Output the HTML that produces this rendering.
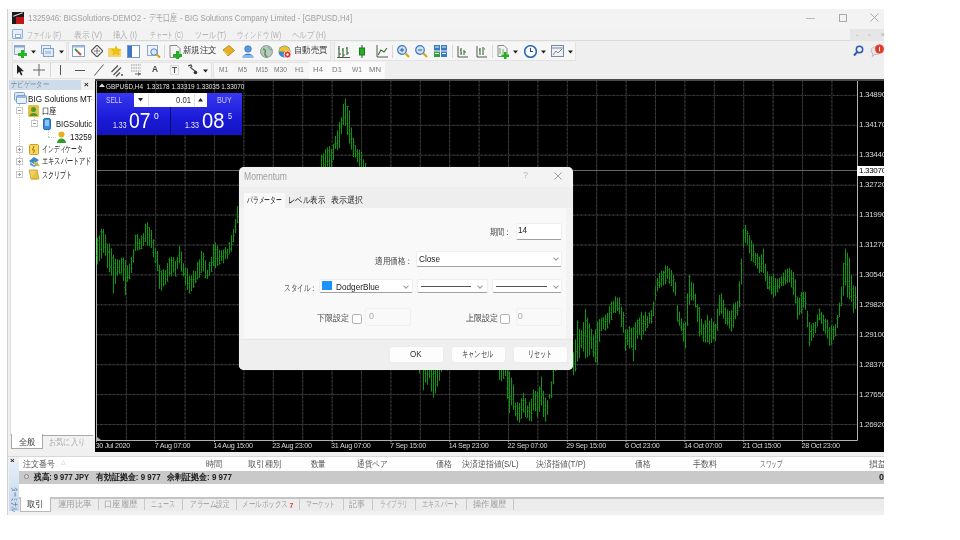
<!DOCTYPE html>
<html><head><meta charset="utf-8">
<style>
*{box-sizing:border-box;margin:0;padding:0}
html,body{width:960px;height:540px;overflow:hidden;background:#fff}
body{position:relative;font-family:"Liberation Sans",sans-serif;font-size:9px;color:#333}
.a{position:absolute;white-space:nowrap}
.mi{position:absolute;top:30px;font-size:9px;color:#a8a8a8;line-height:10px}
.grp{position:absolute;background:#f6f6f6;border:1px solid #e3e3e3}
.sep{position:absolute;width:1px;background:#d6d6d6}
.dd{position:absolute;width:0;height:0;border-left:2.5px solid transparent;border-right:2.5px solid transparent;border-top:3px solid #222}
.tf{position:absolute;top:66px;font-size:7.5px;color:#777;line-height:9px}
.pl{position:absolute;left:859px;width:25px;overflow:hidden;font-size:8px;color:#d8d8d8;font-family:"Liberation Sans",sans-serif;line-height:10px;letter-spacing:-0.3px}
.tl{position:absolute;top:440.5px;font-size:7.2px;color:#d8d8d8;font-family:"Liberation Sans",sans-serif;line-height:10px;letter-spacing:-0.25px}
.nr{position:absolute;font-size:9px;color:#222;line-height:11px}
.th{position:absolute;top:459px;font-size:9px;color:#555;line-height:11px}
.tab{position:absolute;top:500px;font-size:9px;color:#a0a0a0;line-height:10px}
.tsep{position:absolute;top:499px;width:1px;height:11px;background:#c8c8c8}
.lab{position:absolute;font-size:9px;color:#444;line-height:11px}
.inp{position:absolute;background:#fff;border:1px solid #efefef;border-bottom:1px solid #a0a0a0;border-radius:2px}
.chev{position:absolute;width:4px;height:4px;border-right:1px solid #999;border-bottom:1px solid #999;transform:rotate(45deg)}
.btn{position:absolute;top:346px;width:55px;height:17px;background:#fdfdfd;border:1px solid #ececec;border-radius:3px;font-size:9px;color:#333;text-align:center;line-height:16px}
#root{position:absolute;left:0;top:0;width:960px;height:540px;filter:blur(0.4px)}
</style></head><body><div id="root">
<!-- window frame -->
<div class="a" style="left:7px;top:9px;width:877px;height:506px;background:#f0f0f0;border-left:1px solid #d0d0d0"></div>
<!-- title bar -->
<div class="a" style="left:8px;top:9px;width:876px;height:19px;background:#f3f3f3"></div>
<div class="a" style="left:12px;top:12px;width:12px;height:12px;background:#1a1a1a"></div>
<div class="a" style="left:16px;top:17px;width:8px;height:7px;background:#c0161c"></div>
<div class="a" style="left:13px;top:14px;width:10px;height:1px;background:#ddd;transform:rotate(-20deg)"></div>
<div class="a" style="left:806px;top:18px;width:9px;height:1px;background:#b8b8b8"></div>
<div class="a" style="left:839px;top:14px;width:8px;height:8px;border:1px solid #a8a8a8"></div>
<svg class="a" style="left:870px;top:13px" width="9" height="9"><path d="M0.5 0.5L8.5 8.5M8.5 0.5L0.5 8.5" stroke="#a8a8a8" stroke-width="1"/></svg>
<!-- menu -->
<div class="a" style="left:8px;top:28px;width:876px;height:13px;background:#f2f2f2;border-bottom:1px solid #dadada"></div>
<div class="a" style="left:12px;top:29px;width:11px;height:10px;border:1px solid #8fb0d8;background:#e3eefa;border-radius:1px"></div>
<div class="a" style="left:15px;top:34px;width:6px;height:4px;border:1px solid #8fb0d8;background:#fff"></div>
<div class="a" style="left:850px;top:29px;width:34px;height:12px;background:#e6e6e6"></div>
<div class="a" style="left:856px;top:30px;font-size:7px;color:#aaa;line-height:10px;letter-spacing:4px">- ▫ ×</div>
<!-- toolbar 1 -->
<div class="a" style="left:8px;top:41px;width:876px;height:20px;background:#efefef"></div>
<div class="grp" style="left:12px;top:42px;width:55px;height:19px;border-top:none"></div>
<div class="grp" style="left:68px;top:42px;width:263px;height:19px;border-top:none"></div>
<div class="grp" style="left:334px;top:42px;width:242px;height:19px;border-top:none"></div>
<svg class="a" style="left:14px;top:45px" width="13" height="13"><rect x="0.5" y="0.5" width="10" height="9" fill="#e8f0fa" stroke="#8aaad0"/><rect x="0.5" y="0.5" width="10" height="2" fill="#8aaad0"/><path d="M7 5h3v3h3v3h-3v3h-3v-3h-3v-3h3z" fill="#22b822"/></svg>
<svg class="a" style="left:31px;top:50px" width="5" height="4"><path d="M0 0.5H5L2.5 3.5Z" fill="#222"/></svg>
<svg class="a" style="left:41px;top:45px" width="13" height="13"><rect x="0.5" y="0.5" width="9" height="8" fill="#e8f0fa" stroke="#8aaad0"/><rect x="2.5" y="3.5" width="10" height="8" fill="#dfeaf7" stroke="#7fa2cc"/><rect x="4" y="6" width="6" height="3" fill="#b5cbe6"/></svg>
<svg class="a" style="left:59px;top:50px" width="5" height="4"><path d="M0 0.5H5L2.5 3.5Z" fill="#222"/></svg>
<svg class="a" style="left:72px;top:45px" width="13" height="13"><rect x="0.5" y="0.5" width="12" height="11" fill="#fff" stroke="#7fa2cc"/><rect x="0.5" y="0.5" width="12" height="2" fill="#9cb8dc"/><path d="M3 4l3 3" stroke="#3a9a3a" stroke-width="2"/><path d="M6 7l3 3" stroke="#d04a3a" stroke-width="2"/></svg>
<svg class="a" style="left:91px;top:45px" width="12" height="12"><path d="M6 0L12 6L6 12L0 6Z" fill="none" stroke="#555" stroke-width="1.2"/><path d="M6 3V9M3 6H9" stroke="#777"/></svg>
<svg class="a" style="left:108px;top:45px" width="14" height="13"><path d="M0 3h5l1 1h7v8H0z" fill="#f4d266"/><path d="M8 1l1.5 3 3.2.4-2.4 2.2.7 3.2L8 8.3 5.1 9.8l.7-3.2L3.4 4.4l3.2-.4z" fill="#f2c600" stroke="#d8a800" stroke-width=".5"/></svg>
<svg class="a" style="left:127px;top:45px" width="13" height="13"><rect x="0.5" y="0.5" width="12" height="12" fill="#fff" stroke="#6e98cc"/><rect x="1" y="1" width="4" height="11" fill="#3c78c8"/></svg>
<svg class="a" style="left:147px;top:45px" width="14" height="13"><rect x="0.5" y="0.5" width="10" height="10" fill="#eef3fa" stroke="#8aaad0"/><circle cx="7" cy="7" r="3.2" fill="#d8e6f6" stroke="#5a86c0"/><path d="M9.3 9.3L13 12.5" stroke="#d0a020" stroke-width="2"/></svg>
<div class="sep" style="left:164px;top:45px;height:13px"></div>
<svg class="a" style="left:169px;top:45px" width="14" height="14"><path d="M1 0.5h7l3 3v9H1z" fill="#f4f4f4" stroke="#888"/><path d="M7 6h3v3h3v3h-3v3h-3v-3H4V9h3z" fill="#22b022"/></svg>
<svg class="a" style="left:222px;top:45px" width="13" height="12"><path d="M1 5L7 0.5L12.5 5.5L6 11Z" fill="#e8b020" stroke="#a87a10" stroke-width=".8"/><path d="M2 6.5L6 10" stroke="#f8e090"/></svg>
<svg class="a" style="left:242px;top:45px" width="12" height="13"><circle cx="6" cy="4" r="3.3" fill="#5a9ad8" stroke="#2a6ab0" stroke-width=".6"/><path d="M0.5 12.5C0.5 7.5 11.5 7.5 11.5 12.5Z" fill="#3a7ac8"/><rect x="1" y="10" width="10" height="2.5" fill="#8ab8e8"/></svg>
<svg class="a" style="left:260px;top:45px" width="13" height="13"><circle cx="6.5" cy="6.5" r="6" fill="#b8c8c0" stroke="#8a9a90"/><path d="M3 4c2 0 3 2 2 4s1 3 2 4" stroke="#4a9a4a" stroke-width="1.5" fill="none"/><path d="M8 2c1 2 3 3 4 3" stroke="#6a8" fill="none"/></svg>
<svg class="a" style="left:278px;top:45px" width="14" height="14"><circle cx="6.5" cy="6.5" r="6" fill="#3a88d0"/><path d="M1 6.5A5.5 5.5 0 0 1 12 6.5" fill="#f2c020"/><circle cx="9.5" cy="9.5" r="3.5" fill="#e03020" stroke="#fff" stroke-width=".8"/><circle cx="9.5" cy="9.5" r="1.2" fill="#fff"/></svg>
<svg class="a" style="left:337px;top:45px" width="13" height="13"><path d="M2 1v11M1 4h1M2 9h2M6 3v9M5 5h1M6 10h2M10 2v8M9 3h1M10 8h2" stroke="#3a6a3a" stroke-width="1.2"/><path d="M0 12.5h13" stroke="#555"/></svg>
<svg class="a" style="left:356px;top:45px" width="12" height="13"><path d="M6 0v13" stroke="#444"/><rect x="3.5" y="3" width="5" height="7" fill="#22b022" stroke="#1a7a1a"/></svg>
<svg class="a" style="left:376px;top:45px" width="12" height="13"><path d="M1 0v12h11" stroke="#555" fill="none"/><path d="M2 10L5 5L8 7L11 3" stroke="#3a6a3a" stroke-width="1.2" fill="none"/></svg>
<div class="sep" style="left:392px;top:45px;height:13px"></div>
<svg class="a" style="left:397px;top:45px" width="13" height="13"><circle cx="5" cy="5" r="4.3" fill="#cfe2f6" stroke="#3a78c0" stroke-width="1.2"/><path d="M3 5h4M5 3v4" stroke="#2a5aa0"/><path d="M8.3 8.3L12 12" stroke="#d8a820" stroke-width="2.2"/></svg>
<svg class="a" style="left:415px;top:45px" width="13" height="13"><circle cx="5" cy="5" r="4.3" fill="#cfe2f6" stroke="#3a78c0" stroke-width="1.2"/><path d="M3 5h4" stroke="#2a5aa0"/><path d="M8.3 8.3L12 12" stroke="#d8a820" stroke-width="2.2"/></svg>
<svg class="a" style="left:434px;top:45px" width="13" height="12"><rect x="0" y="0" width="6" height="5.5" fill="#3a78c8"/><rect x="7" y="0" width="6" height="5.5" fill="#3a78c8"/><rect x="0" y="6.5" width="6" height="5.5" fill="#3a9a3a"/><rect x="7" y="6.5" width="6" height="5.5" fill="#3a78c8"/><path d="M1 2h4M8 2h4M1 8.5h4M8 8.5h4" stroke="#dfe"/></svg>
<div class="sep" style="left:452px;top:45px;height:13px"></div>
<svg class="a" style="left:456px;top:45px" width="12" height="13"><path d="M2 1v11h10" stroke="#555" fill="none"/><path d="M5 3v7M4 5h1M5 8h1M8 5v5M8 7h2" stroke="#3a6a3a" stroke-width="1.1"/></svg>
<svg class="a" style="left:475px;top:45px" width="12" height="13"><path d="M2 1v11h10" stroke="#555" fill="none"/><path d="M5 3v7M4 5h1M8 2v8M9 4h1" stroke="#3a6a3a" stroke-width="1.1"/></svg>
<div class="sep" style="left:492px;top:45px;height:13px"></div>
<svg class="a" style="left:497px;top:45px" width="13" height="14"><path d="M1 0.5h6l3 3v8H1z" fill="#f2f2f2" stroke="#888"/><path d="M3 3v6M6 4v5" stroke="#6a6"/><path d="M7 7h2.5v2.5H12V12H9.5v2.5H7V12H4.5V9.5H7z" fill="#22b022"/></svg>
<svg class="a" style="left:513px;top:50px" width="5" height="4"><path d="M0 0.5H5L2.5 3.5Z" fill="#222"/></svg>
<svg class="a" style="left:524px;top:45px" width="13" height="13"><circle cx="6.5" cy="6.5" r="5.8" fill="#fff" stroke="#2a6ab8" stroke-width="1.6"/><path d="M6.5 3v3.5h2.5" stroke="#2a4a80" stroke-width="1.1" fill="none"/></svg>
<svg class="a" style="left:541px;top:50px" width="5" height="4"><path d="M0 0.5H5L2.5 3.5Z" fill="#222"/></svg>
<svg class="a" style="left:551px;top:45px" width="13" height="12"><rect x="0.5" y="0.5" width="12" height="11" fill="#eef2f8" stroke="#7a8aa0"/><path d="M1 3h11" stroke="#7a8aa0"/><path d="M2 10L5 6L7 8L11 4" stroke="#888" fill="none"/></svg>
<svg class="a" style="left:568px;top:50px" width="5" height="4"><path d="M0 0.5H5L2.5 3.5Z" fill="#222"/></svg>
<svg class="a" style="left:853px;top:45px" width="11" height="12"><circle cx="6.5" cy="4.5" r="3.2" fill="none" stroke="#2a5ab0" stroke-width="1.5"/><path d="M4.3 6.8L1 10.5" stroke="#2a5ab0" stroke-width="2"/></svg>
<svg class="a" style="left:870px;top:44px" width="14" height="14"><path d="M1 7a5 4 0 1 1 4 3.5L2 12.5L3 9.8A4 4 0 0 1 1 7z" fill="#e6e6e6" stroke="#aaa" stroke-width=".7"/><circle cx="9.5" cy="5" r="4.5" fill="#e63a2a"/><path d="M9.5 2.8v4.5" stroke="#fff" stroke-width="1"/></svg>
<!-- toolbar 2 -->
<div class="a" style="left:8px;top:61px;width:876px;height:18px;background:#efefef"></div>
<div class="grp" style="left:12px;top:62px;width:200px;height:17px"></div>
<div class="grp" style="left:213px;top:62px;width:172px;height:17px"></div>
<div class="a" style="left:309px;top:62px;width:76px;height:17px;background:#fafafa"></div>
<svg class="a" style="left:16px;top:64px" width="8" height="12"><path d="M1 0.5L1 10L3.3 7.8L5 11.5L6.5 10.8L4.8 7.3L8 7.3Z" fill="#222"/></svg>
<svg class="a" style="left:33px;top:64px" width="12" height="12"><path d="M6 0v12M0 6h12" stroke="#666" stroke-width="1"/></svg>
<div class="sep" style="left:50px;top:63px;height:14px"></div>
<svg class="a" style="left:59px;top:64px" width="3" height="12"><path d="M1.5 1v10" stroke="#555" stroke-width="1"/></svg>
<svg class="a" style="left:75px;top:64px" width="10" height="12"><path d="M0 6.5h10" stroke="#555" stroke-width="1"/></svg>
<svg class="a" style="left:94px;top:64px" width="10" height="12"><path d="M0.5 11.5L9.5 0.5" stroke="#555" stroke-width="1"/></svg>
<svg class="a" style="left:111px;top:64px" width="12" height="13"><path d="M0.5 8L7 1.5M2.5 11L10 3.5M5 12.5L9 8.5" stroke="#555" stroke-width="1.3"/><path d="M10 10h2v2h-2z" fill="#777"/></svg>
<svg class="a" style="left:131px;top:64px" width="11" height="12"><path d="M0 1h10M0 4h10M0 7h10" stroke="#8a8a8a" stroke-width=".9" stroke-dasharray="1.5 .8"/><path d="M4 10h6" stroke="#666"/><path d="M7 8l3 2-3 2" fill="#777"/></svg>
<svg class="a" style="left:170px;top:65px" width="9" height="10"><rect x="0.5" y="0.5" width="8" height="9" fill="none" stroke="#bbb" stroke-dasharray="1 1"/><path d="M2 2.5h5M4.5 2.5v5.5" stroke="#555" stroke-width="1.1"/></svg>
<svg class="a" style="left:188px;top:64px" width="10" height="11"><path d="M0 2L3 1L4 3" stroke="#444" fill="none" stroke-width="1.2"/><path d="M2 3L8 8" stroke="#555" stroke-width="1.3"/><circle cx="7.5" cy="8.5" r="1.8" fill="#333"/></svg>
<svg class="a" style="left:203px;top:69px" width="5" height="4"><path d="M0 0.5H5L2.5 3.5Z" fill="#222"/></svg>
<!-- chart -->
<div class="a" style="left:95px;top:78.5px;width:789px;height:373.5px;background:#000;border-top:2.5px solid #4a4a4a"></div>
<svg class="a" style="left:0;top:0" width="960" height="540">
<path d="M126.3 81V440M155.7 81V440M185.1 81V440M214.5 81V440M243.9 81V440M273.3 81V440M302.7 81V440M332.1 81V440M361.5 81V440M390.9 81V440M420.3 81V440M449.7 81V440M479.1 81V440M508.5 81V440M537.9 81V440M567.3 81V440M596.7 81V440M626.1 81V440M655.5 81V440M684.9 81V440M714.3 81V440M743.7 81V440M773.1 81V440M802.5 81V440M831.9 81V440M97 95.4H857M97 125.3H857M97 155.2H857M97 185.2H857M97 215.1H857M97 245.0H857M97 274.9H857M97 304.8H857M97 334.8H857M97 364.7H857M97 394.6H857M97 424.5H857" stroke="#2a2a2a" stroke-width="1" fill="none"/><path d="M126.3 81V440M155.7 81V440M185.1 81V440M214.5 81V440M243.9 81V440M273.3 81V440M302.7 81V440M332.1 81V440M361.5 81V440M390.9 81V440M420.3 81V440M449.7 81V440M479.1 81V440M508.5 81V440M537.9 81V440M567.3 81V440M596.7 81V440M626.1 81V440M655.5 81V440M684.9 81V440M714.3 81V440M743.7 81V440M773.1 81V440M802.5 81V440M831.9 81V440M97 95.4H857M97 125.3H857M97 155.2H857M97 185.2H857M97 215.1H857M97 245.0H857M97 274.9H857M97 304.8H857M97 334.8H857M97 364.7H857M97 394.6H857M97 424.5H857" stroke="#444" stroke-width="1" stroke-dasharray="1,3" fill="none"/>
<path d="M96.5 81V440.5H857.5V81" stroke="#b0b0b0" stroke-width="1" fill="none"/>
<path d="M97 170.5H857" stroke="#666" stroke-width="1" fill="none"/>
<path d="M96.5 440v2M155.7 440v2M214.5 440v2M273.3 440v2M332.1 440v2M390.9 440v2M449.7 440v2M508.5 440v2M567.3 440v2M626.1 440v2M684.9 440v2M743.7 440v2M802.5 440v2" stroke="#aaa" stroke-width="1" fill="none"/>
<path d="M97.5 237.7V264.4M96.5 255.5h1M97.5 240.5h1M99.5 235.3V261.3M98.5 237.5h1M99.5 249.5h1M101.5 228.6V258.5M100.5 231.5h1M101.5 231.5h1M103.5 229.1V253.0M102.5 232.5h1M103.5 234.5h1M105.5 234.9V255.7M104.5 247.5h1M105.5 243.5h1M107.5 243.9V268.0M106.5 265.5h1M107.5 251.5h1M109.5 243.4V272.3M108.5 252.5h1M109.5 267.5h1M111.5 248.3V275.6M110.5 266.5h1M111.5 258.5h1M113.5 254.7V293.4M112.5 257.5h1M113.5 263.5h1M115.5 258.6V283.9M114.5 267.5h1M115.5 273.5h1M117.5 259.3V275.5M116.5 272.5h1M117.5 271.5h1M119.5 259.7V273.8M118.5 267.5h1M119.5 272.5h1M121.5 257.5V272.9M120.5 273.5h1M121.5 259.5h1M123.5 257.4V280.9M122.5 261.5h1M123.5 269.5h1M125.5 260.1V295.3M124.5 287.5h1M125.5 280.5h1M127.5 265.4V281.6M126.5 277.5h1M127.5 275.5h1M129.5 263.7V279.3M128.5 277.5h1M129.5 278.5h1M131.5 257.2V272.9M130.5 258.5h1M131.5 268.5h1M133.5 249.0V262.7M132.5 260.5h1M133.5 253.5h1M135.5 234.9V251.2M134.5 235.5h1M135.5 242.5h1M137.5 234.1V250.5M136.5 235.5h1M137.5 247.5h1M139.5 238.6V250.0M138.5 243.5h1M139.5 248.5h1M141.5 235.5V249.2M140.5 243.5h1M141.5 248.5h1M143.5 233.1V246.0M142.5 237.5h1M143.5 238.5h1M145.5 223.6V241.9M144.5 241.5h1M145.5 226.5h1M147.5 222.5V245.6M146.5 228.5h1M147.5 234.5h1M149.5 227.2V246.2M148.5 227.5h1M149.5 235.5h1M151.5 229.9V247.7M150.5 247.5h1M151.5 242.5h1M153.5 239.4V257.3M152.5 252.5h1M153.5 240.5h1M155.5 248.1V263.1M154.5 261.5h1M155.5 260.5h1M157.5 250.9V271.0M156.5 253.5h1M157.5 264.5h1M159.5 265.0V288.9M158.5 270.5h1M159.5 269.5h1M161.5 270.6V290.8M160.5 271.5h1M161.5 274.5h1M163.5 269.4V286.5M162.5 270.5h1M163.5 284.5h1M165.5 270.1V284.5M164.5 274.5h1M165.5 275.5h1M167.5 263.1V281.5M166.5 279.5h1M167.5 281.5h1M169.5 257.8V276.4M168.5 259.5h1M169.5 260.5h1M171.5 256.8V276.3M170.5 273.5h1M171.5 260.5h1M173.5 256.9V272.5M172.5 265.5h1M173.5 259.5h1M175.5 260.8V276.0M174.5 269.5h1M175.5 276.5h1M177.5 256.8V269.2M176.5 260.5h1M177.5 261.5h1M179.5 245.7V263.4M178.5 255.5h1M179.5 259.5h1M181.5 251.4V271.0M180.5 267.5h1M181.5 271.5h1M183.5 263.2V276.2M182.5 274.5h1M183.5 273.5h1M185.5 267.5V284.6M184.5 274.5h1M185.5 268.5h1M187.5 268.4V289.7M186.5 274.5h1M187.5 283.5h1M189.5 275.7V292.7M188.5 292.5h1M189.5 293.5h1M191.5 275.3V291.3M190.5 279.5h1M191.5 279.5h1M193.5 270.4V288.1M192.5 281.5h1M193.5 286.5h1M195.5 271.0V283.3M194.5 279.5h1M195.5 281.5h1M197.5 261.8V279.7M196.5 278.5h1M197.5 276.5h1M199.5 259.5V277.8M198.5 263.5h1M199.5 274.5h1M201.5 250.8V272.5M200.5 272.5h1M201.5 259.5h1M203.5 252.7V271.5M202.5 266.5h1M203.5 256.5h1M205.5 260.3V278.4M204.5 277.5h1M205.5 275.5h1M207.5 269.8V278.5M206.5 278.5h1M207.5 275.5h1M209.5 261.9V275.8M208.5 264.5h1M209.5 262.5h1M211.5 256.7V271.8M210.5 265.5h1M211.5 271.5h1M213.5 244.0V266.1M212.5 262.5h1M213.5 249.5h1M215.5 242.6V268.3M214.5 249.5h1M215.5 258.5h1M217.5 246.0V266.0M216.5 249.5h1M217.5 264.5h1M219.5 249.7V264.5M218.5 258.5h1M219.5 263.5h1M221.5 250.1V261.4M220.5 256.5h1M221.5 256.5h1M223.5 249.7V263.4M222.5 256.5h1M223.5 252.5h1M225.5 247.0V259.3M224.5 249.5h1M225.5 253.5h1M227.5 248.7V258.9M226.5 252.5h1M227.5 254.5h1M229.5 242.3V253.8M228.5 243.5h1M229.5 249.5h1M231.5 235.1V251.8M230.5 248.5h1M231.5 244.5h1M233.5 228.7V242.4M232.5 241.5h1M233.5 235.5h1M235.5 219.1V233.3M234.5 226.5h1M235.5 229.5h1M237.5 206.0V223.2M236.5 214.5h1M237.5 222.5h1M239.5 200.5V216.6M238.5 216.5h1M239.5 205.5h1M241.5 199.3V216.8M240.5 214.5h1M241.5 202.5h1M243.5 196.0V220.8M242.5 198.5h1M243.5 202.5h1M245.5 195.1V220.0M244.5 215.5h1M245.5 217.5h1M247.5 195.1V220.3M246.5 212.5h1M247.5 199.5h1M249.5 200.2V219.1M248.5 204.5h1M249.5 218.5h1M251.5 195.9V222.6M250.5 222.5h1M251.5 218.5h1M253.5 193.6V222.6M252.5 209.5h1M253.5 203.5h1M255.5 193.4V222.9M254.5 215.5h1M255.5 194.5h1M257.5 195.6V221.5M256.5 196.5h1M257.5 204.5h1M259.5 195.7V220.4M258.5 197.5h1M259.5 220.5h1M261.5 196.5V216.3M260.5 199.5h1M261.5 202.5h1M263.5 190.1V217.3M262.5 197.5h1M263.5 194.5h1M265.5 192.6V215.8M264.5 212.5h1M265.5 199.5h1M267.5 190.0V215.3M266.5 204.5h1M267.5 208.5h1M269.5 189.0V221.5M268.5 211.5h1M269.5 203.5h1M271.5 188.4V214.1M270.5 205.5h1M271.5 209.5h1M273.5 188.0V214.2M272.5 190.5h1M273.5 211.5h1M275.5 190.4V217.8M274.5 206.5h1M275.5 216.5h1M277.5 188.4V218.9M276.5 204.5h1M277.5 196.5h1M279.5 186.7V218.2M278.5 188.5h1M279.5 193.5h1M281.5 187.8V216.5M280.5 210.5h1M281.5 196.5h1M283.5 188.7V217.0M282.5 199.5h1M283.5 189.5h1M285.5 186.3V217.8M284.5 209.5h1M285.5 204.5h1M287.5 185.3V213.7M286.5 212.5h1M287.5 188.5h1M289.5 189.7V213.6M288.5 202.5h1M289.5 210.5h1M291.5 185.7V212.5M290.5 204.5h1M291.5 212.5h1M293.5 184.7V209.4M292.5 202.5h1M293.5 200.5h1M295.5 184.5V212.7M294.5 186.5h1M295.5 188.5h1M297.5 181.1V209.0M296.5 188.5h1M297.5 186.5h1M299.5 180.5V207.7M298.5 204.5h1M299.5 199.5h1M301.5 181.4V212.0M300.5 190.5h1M301.5 195.5h1M303.5 179.7V209.9M302.5 188.5h1M303.5 209.5h1M305.5 185.7V208.5M304.5 191.5h1M305.5 208.5h1M307.5 179.5V209.6M306.5 180.5h1M307.5 191.5h1M309.5 180.2V207.9M308.5 186.5h1M309.5 194.5h1M311.5 174.2V207.8M310.5 177.5h1M311.5 188.5h1M313.5 172.1V207.4M312.5 183.5h1M313.5 180.5h1M315.5 174.1V200.6M314.5 194.5h1M315.5 192.5h1M317.5 172.7V195.2M316.5 181.5h1M317.5 180.5h1M319.5 169.0V194.4M318.5 187.5h1M319.5 185.5h1M321.5 154.7V180.9M320.5 178.5h1M321.5 171.5h1M323.5 153.4V173.5M322.5 156.5h1M323.5 164.5h1M325.5 149.3V170.2M324.5 166.5h1M325.5 167.5h1M327.5 147.4V166.7M326.5 161.5h1M327.5 161.5h1M329.5 146.1V172.0M328.5 150.5h1M329.5 155.5h1M331.5 148.9V168.4M330.5 160.5h1M331.5 161.5h1M333.5 144.2V160.0M332.5 152.5h1M333.5 144.5h1M335.5 136.0V149.1M334.5 143.5h1M335.5 143.5h1M337.5 130.3V150.1M336.5 145.5h1M337.5 135.5h1M339.5 122.2V148.0M338.5 141.5h1M339.5 127.5h1M341.5 116.9V134.1M340.5 125.5h1M341.5 123.5h1M343.5 103.9V125.0M342.5 120.5h1M343.5 117.5h1M345.5 98.6V125.9M344.5 103.5h1M345.5 106.5h1M347.5 106.1V135.0M346.5 123.5h1M347.5 106.5h1M349.5 110.3V143.5M348.5 133.5h1M349.5 133.5h1M351.5 127.5V149.8M350.5 139.5h1M351.5 138.5h1M353.5 137.7V157.1M352.5 155.5h1M353.5 142.5h1M355.5 145.2V157.6M354.5 145.5h1M355.5 151.5h1M357.5 149.1V162.2M356.5 155.5h1M357.5 153.5h1M359.5 149.6V166.5M358.5 153.5h1M359.5 159.5h1M361.5 152.0V172.7M360.5 172.5h1M361.5 155.5h1M363.5 159.3V177.3M362.5 175.5h1M363.5 172.5h1M365.5 163.0V183.9M364.5 173.5h1M365.5 163.5h1M367.5 168.6V195.8M366.5 181.5h1M367.5 177.5h1M369.5 173.0V201.3M368.5 182.5h1M369.5 197.5h1M371.5 174.3V201.1M370.5 197.5h1M371.5 177.5h1M373.5 183.6V204.1M372.5 202.5h1M373.5 190.5h1M375.5 182.1V209.7M374.5 210.5h1M375.5 198.5h1M377.5 186.0V213.5M376.5 194.5h1M377.5 187.5h1M379.5 188.0V214.3M378.5 196.5h1M379.5 213.5h1M381.5 193.1V222.7M380.5 208.5h1M381.5 199.5h1M383.5 198.1V221.3M382.5 219.5h1M383.5 217.5h1M385.5 204.1V225.7M384.5 224.5h1M385.5 216.5h1M387.5 208.8V236.4M386.5 229.5h1M387.5 221.5h1M389.5 213.1V235.8M388.5 220.5h1M389.5 214.5h1M391.5 219.8V246.9M390.5 233.5h1M391.5 229.5h1M393.5 219.9V249.4M392.5 249.5h1M393.5 228.5h1M395.5 228.8V261.3M394.5 247.5h1M395.5 242.5h1M397.5 229.3V270.7M396.5 238.5h1M397.5 267.5h1M399.5 238.3V278.1M398.5 274.5h1M399.5 278.5h1M401.5 243.3V287.1M400.5 252.5h1M401.5 247.5h1M403.5 247.4V295.7M402.5 259.5h1M403.5 260.5h1M405.5 256.5V293.8M404.5 284.5h1M405.5 272.5h1M407.5 263.0V308.1M406.5 280.5h1M407.5 278.5h1M409.5 266.7V321.0M408.5 319.5h1M409.5 274.5h1M411.5 281.3V325.7M410.5 320.5h1M411.5 291.5h1M413.5 286.6V340.7M412.5 308.5h1M413.5 311.5h1M415.5 305.0V341.5M414.5 337.5h1M415.5 306.5h1M417.5 300.0V353.1M416.5 348.5h1M417.5 325.5h1M419.5 316.8V373.3M418.5 339.5h1M419.5 369.5h1M421.5 329.1V369.8M420.5 369.5h1M421.5 339.5h1M423.5 326.4V390.3M422.5 360.5h1M423.5 370.5h1M425.5 341.2V382.7M424.5 368.5h1M425.5 373.5h1M427.5 333.5V384.8M426.5 336.5h1M427.5 374.5h1M429.5 330.0V378.5M428.5 361.5h1M429.5 345.5h1M431.5 332.7V391.7M430.5 370.5h1M431.5 374.5h1M433.5 337.5V397.8M432.5 369.5h1M433.5 373.5h1M435.5 338.0V393.5M434.5 371.5h1M435.5 339.5h1M437.5 331.6V386.7M436.5 384.5h1M437.5 367.5h1M439.5 336.3V380.9M438.5 347.5h1M439.5 347.5h1M441.5 333.1V371.7M440.5 345.5h1M441.5 334.5h1M443.5 321.9V368.2M442.5 341.5h1M443.5 334.5h1M445.5 319.9V363.2M444.5 330.5h1M445.5 321.5h1M447.5 309.7V370.5M446.5 351.5h1M447.5 322.5h1M449.5 313.2V364.0M448.5 339.5h1M449.5 324.5h1M451.5 312.6V369.4M450.5 359.5h1M451.5 326.5h1M453.5 295.8V356.7M452.5 314.5h1M453.5 354.5h1M455.5 297.9V362.5M454.5 312.5h1M455.5 325.5h1M457.5 298.0V344.7M456.5 305.5h1M457.5 316.5h1M459.5 287.3V340.0M458.5 295.5h1M459.5 290.5h1M461.5 282.1V345.4M460.5 339.5h1M461.5 338.5h1M463.5 290.1V331.2M462.5 328.5h1M463.5 304.5h1M465.5 279.0V328.7M464.5 316.5h1M465.5 281.5h1M467.5 285.1V336.0M466.5 304.5h1M467.5 302.5h1M469.5 276.0V340.6M468.5 294.5h1M469.5 299.5h1M471.5 287.0V337.3M470.5 336.5h1M471.5 297.5h1M473.5 276.3V325.1M472.5 316.5h1M473.5 297.5h1M475.5 270.2V329.2M474.5 292.5h1M475.5 324.5h1M477.5 271.1V329.6M476.5 324.5h1M477.5 273.5h1M479.5 273.1V321.3M478.5 310.5h1M479.5 275.5h1M481.5 269.9V335.6M480.5 330.5h1M481.5 287.5h1M483.5 285.1V326.6M482.5 299.5h1M483.5 296.5h1M485.5 292.3V335.0M484.5 304.5h1M485.5 323.5h1M487.5 286.3V344.3M486.5 287.5h1M487.5 330.5h1M489.5 299.7V342.7M488.5 340.5h1M489.5 301.5h1M491.5 293.0V349.2M490.5 347.5h1M491.5 347.5h1M493.5 299.4V356.7M492.5 324.5h1M493.5 328.5h1M495.5 314.0V363.2M494.5 353.5h1M495.5 350.5h1M497.5 325.2V364.3M496.5 349.5h1M497.5 338.5h1M499.5 331.2V380.0M498.5 369.5h1M499.5 335.5h1M501.5 340.8V381.2M500.5 351.5h1M501.5 343.5h1M503.5 344.4V378.6M502.5 356.5h1M503.5 378.5h1M505.5 357.6V376.1M504.5 362.5h1M505.5 359.5h1M507.5 361.8V398.7M506.5 388.5h1M507.5 378.5h1M509.5 371.3V413.0M508.5 397.5h1M509.5 399.5h1M511.5 377.5V405.3M510.5 396.5h1M511.5 381.5h1M513.5 384.6V409.8M512.5 399.5h1M513.5 394.5h1M515.5 402.6V416.2M514.5 406.5h1M515.5 406.5h1M517.5 402.1V420.6M516.5 413.5h1M517.5 408.5h1M519.5 402.9V422.7M518.5 413.5h1M519.5 407.5h1M521.5 398.3V418.0M520.5 418.5h1M521.5 400.5h1M523.5 392.9V412.5M522.5 409.5h1M523.5 411.5h1M525.5 398.1V417.0M524.5 400.5h1M525.5 402.5h1M527.5 405.6V417.5M526.5 417.5h1M527.5 410.5h1M529.5 401.9V420.7M528.5 407.5h1M529.5 417.5h1M531.5 398.6V421.6M530.5 412.5h1M531.5 413.5h1M533.5 389.5V410.6M532.5 393.5h1M533.5 394.5h1M535.5 390.9V411.3M534.5 404.5h1M535.5 395.5h1M537.5 391.4V417.0M536.5 409.5h1M537.5 396.5h1M539.5 386.3V411.9M538.5 407.5h1M539.5 400.5h1M541.5 376.6V405.6M540.5 388.5h1M541.5 393.5h1M543.5 390.8V417.0M542.5 395.5h1M543.5 409.5h1M545.5 397.6V421.4M544.5 405.5h1M545.5 420.5h1M547.5 400.2V414.8M546.5 405.5h1M547.5 406.5h1M549.5 394.4V398.6M548.5 396.5h1M549.5 395.5h1M551.5 381.5V397.9M550.5 382.5h1M551.5 396.5h1M553.5 361.6V384.4M552.5 371.5h1M553.5 382.5h1M555.5 338.1V371.2M554.5 339.5h1M555.5 356.5h1M557.5 333.8V359.6M556.5 336.5h1M557.5 350.5h1M559.5 331.3V363.4M558.5 336.5h1M559.5 340.5h1M561.5 332.7V359.5M560.5 336.5h1M561.5 346.5h1M563.5 335.4V359.1M562.5 340.5h1M563.5 338.5h1M565.5 336.7V359.0M564.5 347.5h1M565.5 338.5h1M567.5 336.5V364.5M566.5 362.5h1M567.5 354.5h1M569.5 341.1V369.4M568.5 363.5h1M569.5 347.5h1M571.5 345.5V368.0M570.5 364.5h1M571.5 350.5h1M573.5 352.3V375.2M572.5 364.5h1M573.5 361.5h1M575.5 339.2V371.5M574.5 363.5h1M575.5 368.5h1M577.5 320.5V361.3M576.5 351.5h1M577.5 322.5h1M579.5 328.8V358.0M578.5 346.5h1M579.5 345.5h1M581.5 329.8V348.4M580.5 338.5h1M581.5 341.5h1M583.5 322.0V351.5M582.5 335.5h1M583.5 335.5h1M585.5 308.8V358.4M584.5 333.5h1M585.5 320.5h1M587.5 317.6V357.3M586.5 336.5h1M587.5 325.5h1M589.5 323.3V355.5M588.5 327.5h1M589.5 337.5h1M591.5 328.7V349.1M590.5 339.5h1M591.5 330.5h1M593.5 335.4V356.8M592.5 351.5h1M593.5 352.5h1M595.5 329.5V362.3M594.5 346.5h1M595.5 342.5h1M597.5 321.6V362.9M596.5 357.5h1M597.5 363.5h1M599.5 319.1V341.7M598.5 323.5h1M599.5 341.5h1M601.5 317.7V331.1M600.5 330.5h1M601.5 320.5h1M603.5 317.0V329.1M602.5 318.5h1M603.5 321.5h1M605.5 314.7V330.6M604.5 329.5h1M605.5 319.5h1M607.5 312.8V328.5M606.5 321.5h1M607.5 327.5h1M609.5 306.2V323.8M608.5 315.5h1M609.5 312.5h1M611.5 301.5V319.8M610.5 304.5h1M611.5 319.5h1M613.5 301.1V313.3M612.5 303.5h1M613.5 311.5h1M615.5 296.3V313.0M614.5 307.5h1M615.5 302.5h1M617.5 297.6V311.0M616.5 305.5h1M617.5 309.5h1M619.5 297.2V314.3M618.5 308.5h1M619.5 304.5h1M621.5 306.6V326.5M620.5 326.5h1M621.5 318.5h1M623.5 311.7V332.8M622.5 321.5h1M623.5 315.5h1M625.5 329.5V350.8M624.5 347.5h1M625.5 335.5h1M627.5 329.4V344.9M626.5 338.5h1M627.5 340.5h1M629.5 326.3V348.7M628.5 327.5h1M629.5 330.5h1M631.5 327.9V347.8M630.5 338.5h1M631.5 346.5h1M633.5 327.2V361.0M632.5 349.5h1M633.5 328.5h1M635.5 322.2V350.1M634.5 325.5h1M635.5 332.5h1M637.5 319.5V339.0M636.5 331.5h1M637.5 323.5h1M639.5 317.6V334.9M638.5 320.5h1M639.5 334.5h1M641.5 311.9V340.0M640.5 315.5h1M641.5 330.5h1M643.5 315.5V334.6M642.5 323.5h1M643.5 321.5h1M645.5 311.7V331.3M644.5 323.5h1M645.5 319.5h1M647.5 316.3V327.7M646.5 327.5h1M647.5 325.5h1M649.5 312.3V323.5M648.5 313.5h1M649.5 318.5h1M651.5 309.8V323.6M650.5 311.5h1M651.5 321.5h1M653.5 301.4V316.0M652.5 315.5h1M653.5 303.5h1M655.5 286.2V299.9M654.5 293.5h1M655.5 295.5h1M657.5 277.8V291.2M656.5 282.5h1M657.5 282.5h1M659.5 273.1V288.1M658.5 285.5h1M659.5 284.5h1M661.5 270.7V286.9M660.5 283.5h1M661.5 278.5h1M663.5 270.9V285.5M662.5 274.5h1M663.5 272.5h1M665.5 265.4V284.3M664.5 272.5h1M665.5 280.5h1M667.5 265.9V278.9M666.5 275.5h1M667.5 269.5h1M669.5 268.3V283.8M668.5 281.5h1M669.5 276.5h1M671.5 270.0V285.9M670.5 285.5h1M671.5 273.5h1M673.5 275.2V292.3M672.5 280.5h1M673.5 279.5h1M675.5 281.6V295.7M674.5 292.5h1M675.5 286.5h1M677.5 305.4V321.5M676.5 309.5h1M677.5 320.5h1M679.5 311.6V325.5M678.5 321.5h1M679.5 325.5h1M681.5 318.2V331.0M680.5 327.5h1M681.5 329.5h1M683.5 322.5V341.4M682.5 333.5h1M683.5 328.5h1M685.5 322.0V348.3M684.5 324.5h1M685.5 346.5h1M687.5 293.4V325.9M686.5 297.5h1M687.5 324.5h1M689.5 275.1V304.5M688.5 276.5h1M689.5 276.5h1M691.5 281.9V300.6M690.5 295.5h1M691.5 296.5h1M693.5 283.0V300.6M692.5 289.5h1M693.5 297.5h1M695.5 293.7V307.5M694.5 295.5h1M695.5 306.5h1M697.5 304.1V322.1M696.5 306.5h1M697.5 308.5h1M699.5 306.9V336.4M698.5 332.5h1M699.5 331.5h1M701.5 318.8V334.8M700.5 329.5h1M701.5 323.5h1M703.5 324.2V341.7M702.5 337.5h1M703.5 328.5h1M705.5 320.3V342.6M704.5 321.5h1M705.5 326.5h1M707.5 315.2V342.5M706.5 325.5h1M707.5 324.5h1M709.5 320.5V344.5M708.5 341.5h1M709.5 335.5h1M711.5 318.1V343.1M710.5 329.5h1M711.5 337.5h1M713.5 322.1V339.6M712.5 331.5h1M713.5 326.5h1M715.5 323.6V341.2M714.5 338.5h1M715.5 327.5h1M717.5 308.6V330.3M716.5 325.5h1M717.5 330.5h1M719.5 294.9V315.5M718.5 305.5h1M719.5 311.5h1M721.5 293.1V314.0M720.5 300.5h1M721.5 311.5h1M723.5 299.7V318.8M722.5 305.5h1M723.5 304.5h1M725.5 307.4V324.0M724.5 309.5h1M725.5 318.5h1M727.5 309.5V325.1M726.5 320.5h1M727.5 322.5h1M729.5 310.8V328.5M728.5 318.5h1M729.5 318.5h1M731.5 310.2V331.4M730.5 329.5h1M731.5 311.5h1M733.5 303.5V327.7M732.5 325.5h1M733.5 316.5h1M735.5 302.4V319.4M734.5 306.5h1M735.5 310.5h1M737.5 301.0V315.7M736.5 312.5h1M737.5 310.5h1M739.5 281.3V307.3M738.5 285.5h1M739.5 303.5h1M741.5 258.5V284.6M740.5 263.5h1M741.5 270.5h1M743.5 228.8V247.6M742.5 231.5h1M743.5 237.5h1M745.5 224.7V243.0M744.5 228.5h1M745.5 230.5h1M747.5 230.9V244.6M746.5 233.5h1M747.5 233.5h1M749.5 235.3V253.1M748.5 245.5h1M749.5 238.5h1M751.5 240.2V260.9M750.5 260.5h1M751.5 255.5h1M753.5 243.4V262.3M752.5 245.5h1M753.5 251.5h1M755.5 252.7V265.6M754.5 262.5h1M755.5 258.5h1M757.5 253.3V268.7M756.5 255.5h1M757.5 257.5h1M759.5 256.6V273.2M758.5 263.5h1M759.5 270.5h1M761.5 254.4V272.2M760.5 266.5h1M761.5 263.5h1M763.5 248.5V273.1M762.5 258.5h1M763.5 267.5h1M765.5 263.7V281.2M764.5 274.5h1M765.5 277.5h1M767.5 271.3V289.0M766.5 284.5h1M767.5 287.5h1M769.5 275.7V290.2M768.5 288.5h1M769.5 286.5h1M771.5 276.2V294.4M770.5 282.5h1M771.5 288.5h1M773.5 274.1V297.5M772.5 292.5h1M773.5 291.5h1M775.5 278.0V296.2M774.5 286.5h1M775.5 286.5h1M777.5 278.6V292.4M776.5 288.5h1M777.5 291.5h1M779.5 277.8V288.8M778.5 286.5h1M779.5 282.5h1M781.5 276.3V286.2M780.5 277.5h1M781.5 282.5h1M783.5 272.5V285.3M782.5 285.5h1M783.5 279.5h1M785.5 269.5V284.6M784.5 278.5h1M785.5 280.5h1M787.5 268.6V282.8M786.5 280.5h1M787.5 276.5h1M789.5 267.9V282.5M788.5 271.5h1M789.5 278.5h1M791.5 269.9V287.2M790.5 272.5h1M791.5 287.5h1M793.5 271.8V295.2M792.5 278.5h1M793.5 281.5h1M795.5 279.4V303.6M794.5 290.5h1M795.5 296.5h1M797.5 296.6V319.6M796.5 302.5h1M797.5 314.5h1M799.5 297.7V314.8M798.5 301.5h1M799.5 311.5h1M801.5 291.9V313.5M800.5 295.5h1M801.5 309.5h1M803.5 291.8V307.8M802.5 299.5h1M803.5 301.5h1M805.5 292.1V309.8M804.5 298.5h1M805.5 303.5h1M807.5 310.5V327.1M806.5 318.5h1M807.5 315.5h1M809.5 322.2V346.3M808.5 342.5h1M809.5 331.5h1M811.5 324.4V341.3M810.5 331.5h1M811.5 329.5h1M813.5 322.9V337.6M812.5 323.5h1M813.5 334.5h1M815.5 321.9V333.2M814.5 325.5h1M815.5 327.5h1M817.5 314.3V326.7M816.5 322.5h1M817.5 319.5h1M819.5 308.6V320.4M818.5 309.5h1M819.5 318.5h1M821.5 311.9V323.9M820.5 314.5h1M821.5 322.5h1M823.5 314.6V331.1M822.5 315.5h1M823.5 330.5h1M825.5 318.7V333.7M824.5 320.5h1M825.5 321.5h1M827.5 319.6V338.6M826.5 326.5h1M827.5 323.5h1M829.5 327.2V345.9M828.5 330.5h1M829.5 344.5h1M831.5 325.5V344.6M830.5 338.5h1M831.5 343.5h1M833.5 325.9V340.0M832.5 329.5h1M833.5 336.5h1M835.5 324.2V336.2M834.5 329.5h1M835.5 335.5h1M837.5 315.0V328.0M836.5 318.5h1M837.5 317.5h1M839.5 302.5V317.0M838.5 309.5h1M839.5 305.5h1M841.5 286.5V306.1M840.5 297.5h1M841.5 303.5h1M843.5 262.9V295.7M842.5 278.5h1M843.5 281.5h1M845.5 248.7V285.5M844.5 263.5h1M845.5 264.5h1M847.5 252.7V297.6M846.5 281.5h1M847.5 281.5h1M849.5 257.7V299.3M848.5 286.5h1M849.5 296.5h1M851.5 275.2V302.1M850.5 289.5h1M851.5 288.5h1M853.5 285.3V312.8M852.5 305.5h1M853.5 302.5h1M855.5 286.4V308.9M854.5 295.5h1M855.5 297.5h1" stroke="#0e960e" stroke-width="1" fill="none"/>
<path d="M97 437L101 440H97Z" fill="#aaa"/>
</svg>
<div class="pl" style="top:90.4px">1.34890</div><div class="pl" style="top:120.3px">1.34170</div><div class="pl" style="top:150.2px">1.33440</div><div class="pl" style="top:180.2px">1.32720</div><div class="pl" style="top:210.1px">1.31990</div><div class="pl" style="top:240.0px">1.31270</div><div class="pl" style="top:269.9px">1.30540</div><div class="pl" style="top:299.8px">1.29820</div><div class="pl" style="top:329.8px">1.29100</div><div class="pl" style="top:359.7px">1.28370</div><div class="pl" style="top:389.6px">1.27650</div><div class="pl" style="top:419.5px">1.26920</div>
<div class="a" style="left:857px;top:166px;width:27px;height:9.5px;background:#fff"></div>
<div class="a" style="left:859px;top:165.5px;width:25px;overflow:hidden;font-size:8px;color:#000;line-height:10px;letter-spacing:-0.3px">1.33070</div>
<div class="tl" style="left:95.5px">30 Jul 2020</div><div class="tl" style="left:154.7px">7 Aug 07:00</div><div class="tl" style="left:213.5px">14 Aug 15:00</div><div class="tl" style="left:272.3px">23 Aug 23:00</div><div class="tl" style="left:331.1px">31 Aug 07:00</div><div class="tl" style="left:389.9px">7 Sep 15:00</div><div class="tl" style="left:448.7px">14 Sep 23:00</div><div class="tl" style="left:507.5px">22 Sep 07:00</div><div class="tl" style="left:566.3px">29 Sep 15:00</div><div class="tl" style="left:625.1px">6 Oct 23:00</div><div class="tl" style="left:683.9px">14 Oct 07:00</div><div class="tl" style="left:742.7px">21 Oct 15:00</div><div class="tl" style="left:801.5px">28 Oct 23:00</div>
<!-- chart header + trade panel -->
<svg class="a" style="left:99px;top:83px" width="6" height="5"><path d="M0 4L3 0.5L6 4Z" fill="#ddd"/></svg>
<div class="a" style="left:97px;top:93px;width:145px;height:42px;background:linear-gradient(#3838f2,#1a1ad8 60%,#1414c0)"></div>
<div class="a" style="left:169.5px;top:107px;width:1.5px;height:28px;background:#0a0a70"></div>
<div class="a" style="left:134px;top:93px;width:73px;height:14px;background:#fff"></div>
<div class="a" style="left:148px;top:94px;width:1px;height:12px;background:#ddd"></div>
<div class="a" style="left:194px;top:94px;width:1px;height:12px;background:#ddd"></div>
<svg class="a" style="left:138px;top:98px" width="5" height="4"><path d="M0 0H5L2.5 3.5Z" fill="#222"/></svg>
<svg class="a" style="left:198px;top:98px" width="5" height="4"><path d="M0 3.5H5L2.5 0Z" fill="#222"/></svg>
<!-- navigator -->
<div class="a" style="left:8px;top:79px;width:87px;height:373px;background:#f0f0f0"></div>
<div class="a" style="left:9px;top:80px;width:72px;height:10px;background:#cddcec"></div>
<div class="a" style="left:84px;top:80px;font-size:8px;color:#222;line-height:10px;font-weight:bold">×</div>
<div class="a" style="left:10px;top:90px;width:84px;height:345px;background:#fff;border-left:1px solid #dcdcdc"></div>
<div class="a" style="left:19px;top:104px;width:1px;height:72px;border-left:1px dotted #c8c8c8"></div>
<div class="a" style="left:34px;top:117px;width:1px;height:7px;border-left:1px dotted #c8c8c8"></div>
<div class="a" style="left:48px;top:130px;width:1px;height:7px;border-left:1px dotted #c8c8c8"></div>
<div class="a" style="left:48px;top:137px;width:8px;height:1px;border-top:1px dotted #c8c8c8"></div>
<svg class="a" style="left:14px;top:92px" width="13" height="12"><rect x="0.5" y="0.5" width="10" height="8" rx="1" fill="#dce8f6" stroke="#7d9fcc"/><rect x="2.5" y="3.5" width="10" height="8" rx="1" fill="#e8f0fa" stroke="#7d9fcc"/><rect x="3" y="4" width="9" height="2" fill="#9ab8dc"/></svg>
<div class="a" style="left:16px;top:107px;width:7px;height:7px;border:1px solid #c8c8c8;background:#fff"></div>
<div class="a" style="left:18px;top:110px;width:3px;height:1px;background:#999"></div>
<svg class="a" style="left:28px;top:105px" width="11" height="12"><rect x="0" y="0" width="11" height="12" rx="1.5" fill="#e8c040"/><circle cx="5.5" cy="4.5" r="2.5" fill="#4a9a30"/><path d="M1.5 11c0-4 8-4 8 0z" fill="#4a9a30"/></svg>
<div class="a" style="left:31px;top:120px;width:7px;height:7px;border:1px solid #c8c8c8;background:#fff"></div>
<div class="a" style="left:33px;top:123px;width:3px;height:1px;background:#999"></div>
<svg class="a" style="left:43px;top:118px" width="8" height="12"><rect x="0.5" y="0.5" width="7" height="11" rx="1.5" fill="#3a8ee0" stroke="#2a6ab0"/><rect x="2" y="2" width="4" height="6" fill="#8cc4f4"/></svg>
<svg class="a" style="left:57px;top:131px" width="9" height="12"><circle cx="4.5" cy="3.5" r="3" fill="#e8b020"/><path d="M0 12c0-6 9-6 9 0z" fill="#2aa02a"/></svg>
<div class="a" style="left:16px;top:146px;width:7px;height:7px;border:1px solid #c8c8c8;background:#fff"></div>
<div class="a" style="left:18px;top:149px;width:3px;height:1px;background:#999"></div>
<div class="a" style="left:19px;top:148px;width:1px;height:3px;background:#999"></div>
<svg class="a" style="left:29px;top:144px" width="10" height="11"><rect x="0.5" y="0.5" width="9" height="10" rx="1" fill="#f6d860" stroke="#c8a020"/><path d="M5 2L3.5 6h2L4.5 9" stroke="#b07010" fill="none"/></svg>
<div class="a" style="left:16px;top:158px;width:7px;height:7px;border:1px solid #c8c8c8;background:#fff"></div>
<div class="a" style="left:18px;top:161px;width:3px;height:1px;background:#999"></div>
<div class="a" style="left:19px;top:160px;width:1px;height:3px;background:#999"></div>
<svg class="a" style="left:28px;top:156px" width="12" height="11"><path d="M1 5L6 1L11 4L6 8Z" fill="#3a88c8"/><path d="M2 6L6 9L10 6v3L6 11L2 9z" fill="#58a8d8"/><path d="M6 6l5 4" stroke="#e8b020" stroke-width="2"/></svg>
<div class="a" style="left:16px;top:171px;width:7px;height:7px;border:1px solid #c8c8c8;background:#fff"></div>
<div class="a" style="left:18px;top:174px;width:3px;height:1px;background:#999"></div>
<div class="a" style="left:19px;top:173px;width:1px;height:3px;background:#999"></div>
<svg class="a" style="left:28px;top:169px" width="12" height="12"><path d="M1 1h8v9H3z" fill="#f0d060" stroke="#c0a030" stroke-width=".8"/><path d="M3 10h8l-2-9" fill="#e8c040" stroke="#c0a030" stroke-width=".8"/></svg>
<div class="a" style="left:11px;top:434px;width:32px;height:15px;background:#fff;border:1px solid #a8a8a8;border-top:none"></div>
<div class="a" style="left:42px;top:435px;width:51px;height:1px;background:#a8a8a8"></div><div class="a" style="left:43px;top:436px;width:49px;height:12px;background:#f2f2f2"></div>
<!-- terminal -->
<div class="a" style="left:8px;top:456px;width:876px;height:59px;background:#f0f0f0;border-top:1px solid #d8d8d8"></div>
<div class="a" style="left:10px;top:456px;font-size:8px;color:#222;line-height:10px;font-weight:bold">×</div>
<div class="a" style="left:9px;top:462px;width:10px;height:49px;background:linear-gradient(#e4eef8,#c4d8ee)"></div>
<div class="a" style="left:-0.5px;top:491px;width:28px;height:10px;font-size:8px;line-height:10px;color:#5a7090;transform:rotate(90deg) scaleX(0.62);text-align:center;overflow:visible">ターミナル</div>
<div class="a" style="left:19px;top:457px;width:865px;height:14px;background:#fff"></div>
<div class="a" style="left:19px;top:471px;width:865px;height:13px;background:#c9c9c9"></div>
<div class="a" style="left:24px;top:474px;width:5px;height:5px;border-radius:50%;border:1px solid #888;background:#ddd"></div>
<div class="a" style="left:19px;top:484px;width:865px;height:13px;background:#fff"></div>
<div class="a" style="left:19px;top:497px;width:865px;height:14px;background:#ececec;border-top:2px solid #c4c4c4"></div>
<div class="a" style="left:20px;top:497px;width:31px;height:15px;background:#fff;border:1px solid #b8b8b8;border-top:none"></div>
<div class="tsep" style="left:98px"></div>
<div class="tsep" style="left:144px"></div>
<div class="tsep" style="left:182px"></div>
<div class="tsep" style="left:236px"></div>
<div class="tsep" style="left:299px"></div>
<div class="tsep" style="left:343px"></div>
<div class="tsep" style="left:372px"></div>
<div class="tsep" style="left:415px"></div>
<div class="tsep" style="left:466px"></div>
<div class="tsep" style="left:513px"></div>
<!-- dialog -->
<div class="a" style="left:239px;top:167px;width:334px;height:203px;background:#f3f3f3;border-radius:5px;overflow:hidden;box-shadow:0 0 1px #888">
 <div class="a" style="left:0;top:20px;width:334px;height:21px;background:#eeeeee"></div>
 <div class="a" style="left:5px;top:41px;width:322px;height:130px;background:#f9f9f9"></div>
 <div class="a" style="left:0;top:172px;width:334px;height:31px;background:#efefef;border-top:1px solid #e6e6e6"></div>
</div>
<svg class="a" style="left:554px;top:172px" width="8" height="8"><path d="M0.5 0.5L7.5 7.5M7.5 0.5L0.5 7.5" stroke="#a0a0a0" stroke-width="1"/></svg>
<div class="a" style="left:244px;top:193px;width:41px;height:15px;background:#f9f9f9"></div>
<div class="inp" style="left:516px;top:223px;width:46px;height:17px"></div>
<div class="inp" style="left:416px;top:251px;width:146px;height:16px"></div>
<div class="chev" style="left:554px;top:256px"></div>
<div class="inp" style="left:319px;top:279px;width:94px;height:14px"></div>
<div class="a" style="left:322px;top:281px;width:10px;height:9px;background:#1e90ff"></div>
<div class="chev" style="left:404px;top:284px"></div>
<div class="inp" style="left:417px;top:279px;width:71px;height:14px"></div>
<div class="a" style="left:421px;top:286px;width:50px;height:1px;background:#555"></div>
<div class="chev" style="left:478px;top:284px"></div>
<div class="inp" style="left:492px;top:279px;width:70px;height:14px"></div>
<div class="a" style="left:496px;top:286px;width:51px;height:1px;background:#555"></div>
<div class="chev" style="left:554px;top:284px"></div>
<div class="a" style="left:352px;top:314px;width:9.5px;height:9.5px;border:1px solid #b4b4b4;border-radius:2px;background:#fff"></div>
<div class="a" style="left:365px;top:308px;width:46px;height:18px;border:1px solid #f1f1f1;border-radius:2px"></div>
<div class="a" style="left:500px;top:314px;width:9.5px;height:9.5px;border:1px solid #b4b4b4;border-radius:2px;background:#fff"></div>
<div class="a" style="left:516px;top:308px;width:46px;height:18px;border:1px solid #f1f1f1;border-radius:2px"></div>
<div class="btn" style="left:389px"></div>
<div class="btn" style="left:451px"></div>
<div class="btn" style="left:513px"></div>
<div class="a" id="t0" style="left:28.0px;top:12.3px;line-height:12.3px;font-size:9.5px;color:#a0a0a0;transform:scaleX(0.840);transform-origin:0 0">1325946: BIGSolutions-DEMO2 -</div>
<div class="a" id="t1" style="left:149.0px;top:12.3px;line-height:12.3px;font-size:9.5px;color:#a0a0a0;transform:scaleX(0.713);transform-origin:0 0">デモ口座</div>
<div class="a" id="t2" style="left:180.0px;top:12.3px;line-height:12.3px;font-size:9.5px;color:#a0a0a0;transform:scaleX(0.823);transform-origin:0 0">- BIG Solutions Company Limited - [GBPUSD,H4]</div>
<div class="a" id="t3" style="left:27.0px;top:30.1px;line-height:11.7px;font-size:9px;color:#b0b0b0;transform:scaleX(0.680);transform-origin:0 0">ファイル (F)</div>
<div class="a" id="t4" style="left:74.0px;top:30.1px;line-height:11.7px;font-size:9px;color:#b0b0b0;transform:scaleX(0.862);transform-origin:0 0">表示 (V)</div>
<div class="a" id="t5" style="left:113.0px;top:30.1px;line-height:11.7px;font-size:9px;color:#b0b0b0;transform:scaleX(0.828);transform-origin:0 0">挿入 (I)</div>
<div class="a" id="t6" style="left:150.0px;top:30.1px;line-height:11.7px;font-size:9px;color:#b0b0b0;transform:scaleX(0.647);transform-origin:0 0">チャート (C)</div>
<div class="a" id="t7" style="left:195.0px;top:30.1px;line-height:11.7px;font-size:9px;color:#b0b0b0;transform:scaleX(0.756);transform-origin:0 0">ツール (T)</div>
<div class="a" id="t8" style="left:237.0px;top:30.1px;line-height:11.7px;font-size:9px;color:#b0b0b0;transform:scaleX(0.710);transform-origin:0 0">ウィンドウ (W)</div>
<div class="a" id="t9" style="left:292.0px;top:30.1px;line-height:11.7px;font-size:9px;color:#b0b0b0;transform:scaleX(0.810);transform-origin:0 0">ヘルプ (H)</div>
<div class="a" id="t10" style="left:183.0px;top:45.1px;line-height:11.7px;font-size:9px;color:#333;transform:scaleX(0.944);transform-origin:0 0">新規注文</div>
<div class="a" id="t11" style="left:294.0px;top:45.1px;line-height:11.7px;font-size:9px;color:#333;transform:scaleX(0.917);transform-origin:0 0">自動売買</div>
<div class="a" id="t12" style="left:219.0px;top:64.8px;line-height:10.4px;font-size:8px;color:#777;transform:scaleX(0.809);transform-origin:0 0">M1</div>
<div class="a" id="t13" style="left:238.0px;top:64.8px;line-height:10.4px;font-size:8px;color:#777;transform:scaleX(0.809);transform-origin:0 0">M5</div>
<div class="a" id="t14" style="left:256.0px;top:64.8px;line-height:10.4px;font-size:8px;color:#777;transform:scaleX(0.771);transform-origin:0 0">M15</div>
<div class="a" id="t15" style="left:274.0px;top:64.8px;line-height:10.4px;font-size:8px;color:#777;transform:scaleX(0.835);transform-origin:0 0">M30</div>
<div class="a" id="t16" style="left:295.0px;top:64.8px;line-height:10.4px;font-size:8px;color:#777;transform:scaleX(0.879);transform-origin:0 0">H1</div>
<div class="a" id="t17" style="left:313.0px;top:64.8px;line-height:10.4px;font-size:8px;color:#777;transform:scaleX(0.977);transform-origin:0 0">H4</div>
<div class="a" id="t18" style="left:332.0px;top:64.8px;line-height:10.4px;font-size:8px;color:#777;transform:scaleX(0.977);transform-origin:0 0">D1</div>
<div class="a" id="t19" style="left:352.0px;top:64.8px;line-height:10.4px;font-size:8px;color:#777;transform:scaleX(0.833);transform-origin:0 0">W1</div>
<div class="a" id="t20" style="left:369.0px;top:64.8px;line-height:10.4px;font-size:8px;color:#777;transform:scaleX(0.964);transform-origin:0 0">MN</div>
<div class="a" id="t21" style="left:152.0px;top:64.2px;line-height:11.7px;font-size:9px;color:#444;font-weight:bold;transform:scaleX(0.923);transform-origin:0 0">A</div>
<div class="a" id="t22" style="left:106.0px;top:81.5px;line-height:9.1px;font-size:7px;color:#e4e4e4;transform:scaleX(0.914);transform-origin:0 0">GBPUSD,H4&nbsp; 1.33178 1.33319 1.33035 1.33070</div>
<div class="a" id="t23" style="left:106.4px;top:95.2px;line-height:11.7px;font-size:9px;color:#c8c8ff;transform:scaleX(0.735);transform-origin:0 0">SELL</div>
<div class="a" id="t24" style="left:217.0px;top:95.2px;line-height:11.7px;font-size:9px;color:#c8c8ff;transform:scaleX(0.794);transform-origin:0 0">BUY</div>
<div class="a" id="t25" style="left:175.6px;top:94.8px;line-height:11.7px;font-size:9px;color:#333;transform:scaleX(0.856);transform-origin:0 0">0.01</div>
<div class="a" id="t26" style="left:112.5px;top:120.2px;line-height:11.7px;font-size:9px;color:#eaeaff;transform:scaleX(0.770);transform-origin:0 0">1.33</div>
<div class="a" id="t27" style="left:128.5px;top:106.7px;line-height:28.6px;font-size:22px;color:#fff;transform:scaleX(0.878);transform-origin:0 0">07</div>
<div class="a" id="t28" style="left:154.0px;top:110.7px;line-height:11.7px;font-size:9px;color:#fff;transform:scaleX(0.937);transform-origin:0 0">0</div>
<div class="a" id="t29" style="left:185.0px;top:120.2px;line-height:11.7px;font-size:9px;color:#eaeaff;transform:scaleX(0.793);transform-origin:0 0">1.33</div>
<div class="a" id="t30" style="left:202.0px;top:106.7px;line-height:28.6px;font-size:22px;color:#fff;transform:scaleX(0.915);transform-origin:0 0">08</div>
<div class="a" id="t31" style="left:228.3px;top:110.7px;line-height:11.7px;font-size:9px;color:#fff;transform:scaleX(0.798);transform-origin:0 0">5</div>
<div class="a" id="t32" style="left:11.0px;top:79.8px;line-height:10.4px;font-size:8px;color:#8a8a8a;transform:scaleX(0.792);transform-origin:0 0">ナビゲーター</div>
<div class="a" id="t33" style="left:28.0px;top:93.7px;line-height:11.7px;font-size:9px;color:#111;transform:scaleX(0.904);transform-origin:0 0;width:70.8px;overflow:hidden">BIG Solutions MT-</div>
<div class="a" id="t34" style="left:42.0px;top:106.2px;line-height:11.7px;font-size:9px;color:#111;transform:scaleX(0.833);transform-origin:0 0">口座</div>
<div class="a" id="t35" style="left:56.0px;top:119.2px;line-height:11.7px;font-size:9px;color:#111;transform:scaleX(0.846);transform-origin:0 0;width:42.5px;overflow:hidden">BIGSolutic</div>
<div class="a" id="t36" style="left:70.0px;top:132.2px;line-height:11.7px;font-size:9px;color:#111;transform:scaleX(0.879);transform-origin:0 0;width:25.0px;overflow:hidden">13259</div>
<div class="a" id="t37" style="left:42.0px;top:143.7px;line-height:11.7px;font-size:9px;color:#111;transform:scaleX(0.651);transform-origin:0 0">インディケータ</div>
<div class="a" id="t38" style="left:42.0px;top:156.2px;line-height:11.7px;font-size:9px;color:#111;transform:scaleX(0.686);transform-origin:0 0">エキスパートアド</div>
<div class="a" id="t39" style="left:42.0px;top:169.7px;line-height:11.7px;font-size:9px;color:#111;transform:scaleX(0.667);transform-origin:0 0">スクリプト</div>
<div class="a" id="t40" style="left:19.4px;top:437.1px;line-height:11.7px;font-size:9px;color:#444;transform:scaleX(0.922);transform-origin:0 0">全般</div>
<div class="a" id="t41" style="left:49.0px;top:437.1px;line-height:11.7px;font-size:9px;color:#aaa;transform:scaleX(0.800);transform-origin:0 0">お気に入り</div>
<div class="a" id="t42" style="left:23.0px;top:459.1px;line-height:11.7px;font-size:9px;color:#555;transform:scaleX(0.889);transform-origin:0 0">注文番号</div>
<div class="a" id="t43" style="left:205.6px;top:459.1px;line-height:11.7px;font-size:9px;color:#555;transform:scaleX(0.911);transform-origin:0 0">時間</div>
<div class="a" id="t44" style="left:248.0px;top:459.1px;line-height:11.7px;font-size:9px;color:#555;transform:scaleX(0.936);transform-origin:0 0">取引種別</div>
<div class="a" id="t45" style="left:311.0px;top:459.1px;line-height:11.7px;font-size:9px;color:#555;transform:scaleX(0.833);transform-origin:0 0">数量</div>
<div class="a" id="t46" style="left:356.7px;top:459.1px;line-height:11.7px;font-size:9px;color:#555;transform:scaleX(0.842);transform-origin:0 0">通貨ペア</div>
<div class="a" id="t47" style="left:436.0px;top:459.1px;line-height:11.7px;font-size:9px;color:#555;transform:scaleX(0.889);transform-origin:0 0">価格</div>
<div class="a" id="t48" style="left:462.0px;top:459.1px;line-height:11.7px;font-size:9px;color:#555;transform:scaleX(0.876);transform-origin:0 0">決済逆指値(S/L)</div>
<div class="a" id="t49" style="left:536.0px;top:459.1px;line-height:11.7px;font-size:9px;color:#555;transform:scaleX(0.886);transform-origin:0 0">決済指値(T/P)</div>
<div class="a" id="t50" style="left:634.6px;top:459.1px;line-height:11.7px;font-size:9px;color:#555;transform:scaleX(0.856);transform-origin:0 0">価格</div>
<div class="a" id="t51" style="left:693.0px;top:459.1px;line-height:11.7px;font-size:9px;color:#555;transform:scaleX(0.889);transform-origin:0 0">手数料</div>
<div class="a" id="t52" style="left:760.0px;top:459.1px;line-height:11.7px;font-size:9px;color:#555;transform:scaleX(0.625);transform-origin:0 0">スワップ</div>
<div class="a" id="t53" style="left:869.0px;top:459.1px;line-height:11.7px;font-size:9px;color:#555;width:15px;overflow:hidden">損益</div>
<div class="a" id="t54" style="left:34.4px;top:471.6px;line-height:11.7px;font-size:9px;color:#222;font-weight:bold;transform:scaleX(0.842);transform-origin:0 0">残高: 9 977 JPY</div>
<div class="a" id="t55" style="left:95.8px;top:471.6px;line-height:11.7px;font-size:9px;color:#222;font-weight:bold;transform:scaleX(0.885);transform-origin:0 0">有効証拠金: 9 977</div>
<div class="a" id="t56" style="left:166.7px;top:471.6px;line-height:11.7px;font-size:9px;color:#222;font-weight:bold;transform:scaleX(0.890);transform-origin:0 0">余剰証拠金: 9 977</div>
<div class="a" id="t57" style="left:879.0px;top:471.6px;line-height:11.7px;font-size:9px;color:#222;font-weight:bold;width:5px;overflow:hidden">0</div>
<div class="a" id="t58" style="left:27.0px;top:499.1px;line-height:11.7px;font-size:9px;color:#333;transform:scaleX(0.931);transform-origin:0 0">取引</div>
<div class="a" id="t59" style="left:58.0px;top:499.1px;line-height:11.7px;font-size:9px;color:#a0a0a0;transform:scaleX(0.944);transform-origin:0 0">運用比率</div>
<div class="a" id="t60" style="left:104.0px;top:499.1px;line-height:11.7px;font-size:9px;color:#a0a0a0;transform:scaleX(0.931);transform-origin:0 0">口座履歴</div>
<div class="a" id="t61" style="left:151.0px;top:499.1px;line-height:11.7px;font-size:9px;color:#a0a0a0;transform:scaleX(0.667);transform-origin:0 0">ニュース</div>
<div class="a" id="t62" style="left:190.0px;top:499.1px;line-height:11.7px;font-size:9px;color:#a0a0a0;transform:scaleX(0.733);transform-origin:0 0">アラーム設定</div>
<div class="a" id="t63" style="left:242.0px;top:499.1px;line-height:11.7px;font-size:9px;color:#a0a0a0;transform:scaleX(0.730);transform-origin:0 0">メールボックス</div>
<div class="a" id="t64" style="left:305.6px;top:499.1px;line-height:11.7px;font-size:9px;color:#a0a0a0;transform:scaleX(0.649);transform-origin:0 0">マーケット</div>
<div class="a" id="t65" style="left:349.0px;top:499.1px;line-height:11.7px;font-size:9px;color:#a0a0a0;transform:scaleX(0.889);transform-origin:0 0">記事</div>
<div class="a" id="t66" style="left:380.0px;top:499.1px;line-height:11.7px;font-size:9px;color:#a0a0a0;transform:scaleX(0.622);transform-origin:0 0">ライブラリ</div>
<div class="a" id="t67" style="left:421.7px;top:499.1px;line-height:11.7px;font-size:9px;color:#a0a0a0;transform:scaleX(0.691);transform-origin:0 0">エキスパート</div>
<div class="a" id="t68" style="left:472.7px;top:499.1px;line-height:11.7px;font-size:9px;color:#a0a0a0;transform:scaleX(0.925);transform-origin:0 0">操作履歴</div>
<div class="a" id="t69" style="left:289.5px;top:501.4px;line-height:9.1px;font-size:7px;color:#e03a3a;font-weight:bold">7</div>
<div class="a" id="t70" style="left:61.0px;top:459.1px;line-height:7.8px;font-size:6px;color:#bbb">△</div>
<div class="a" id="t71" style="left:244.0px;top:170.0px;line-height:13.0px;font-size:10px;color:#a0a0a0;transform:scaleX(0.860);transform-origin:0 0">Momentum</div>
<div class="a" id="t72" style="left:523.0px;top:170.2px;line-height:11.7px;font-size:9px;color:#b8b8b8">?</div>
<div class="a" id="t73" style="left:247.0px;top:194.7px;line-height:11.7px;font-size:9px;color:#1a1a1a;transform:scaleX(0.648);transform-origin:0 0">パラメーター</div>
<div class="a" id="t74" style="left:288.0px;top:194.7px;line-height:11.7px;font-size:9px;color:#1a1a1a;transform:scaleX(0.822);transform-origin:0 0">レベル表示</div>
<div class="a" id="t75" style="left:331.0px;top:194.7px;line-height:11.7px;font-size:9px;color:#1a1a1a;transform:scaleX(0.889);transform-origin:0 0">表示選択</div>
<div class="a" id="t76" style="left:489.6px;top:226.7px;line-height:11.7px;font-size:9px;color:#444;transform:scaleX(0.793);transform-origin:0 0">期間：</div>
<div class="a" id="t77" style="left:518.0px;top:225.2px;line-height:11.7px;font-size:9px;color:#222;transform:scaleX(0.899);transform-origin:0 0">14</div>
<div class="a" id="t78" style="left:375.0px;top:255.7px;line-height:11.7px;font-size:9px;color:#444;transform:scaleX(0.844);transform-origin:0 0">適用価格：</div>
<div class="a" id="t79" style="left:419.0px;top:254.0px;line-height:11.7px;font-size:9px;color:#222;transform:scaleX(0.912);transform-origin:0 0">Close</div>
<div class="a" id="t80" style="left:284.4px;top:282.6px;line-height:11.7px;font-size:9px;color:#444;transform:scaleX(0.724);transform-origin:0 0">スタイル：</div>
<div class="a" id="t81" style="left:335.5px;top:281.6px;line-height:11.7px;font-size:9px;color:#222;transform:scaleX(0.913);transform-origin:0 0">DodgerBlue</div>
<div class="a" id="t82" style="left:316.7px;top:313.1px;line-height:11.7px;font-size:9px;color:#444;transform:scaleX(0.894);transform-origin:0 0">下限設定</div>
<div class="a" id="t83" style="left:368.9px;top:310.6px;line-height:11.7px;font-size:9px;color:#aaa">0</div>
<div class="a" id="t84" style="left:465.6px;top:313.1px;line-height:11.7px;font-size:9px;color:#444;transform:scaleX(0.894);transform-origin:0 0">上限設定</div>
<div class="a" id="t85" style="left:517.8px;top:310.6px;line-height:11.7px;font-size:9px;color:#aaa">0</div>
<div class="a" id="t86" style="left:410.0px;top:348.8px;line-height:11.7px;font-size:9px;color:#333;transform:scaleX(0.899);transform-origin:0 0">OK</div>
<div class="a" id="t87" style="left:462.3px;top:348.8px;line-height:11.7px;font-size:9px;color:#333;transform:scaleX(0.693);transform-origin:0 0">キャンセル</div>
<div class="a" id="t88" style="left:528.0px;top:348.8px;line-height:11.7px;font-size:9px;color:#333;transform:scaleX(0.667);transform-origin:0 0">リセット</div>
</div></body></html>
